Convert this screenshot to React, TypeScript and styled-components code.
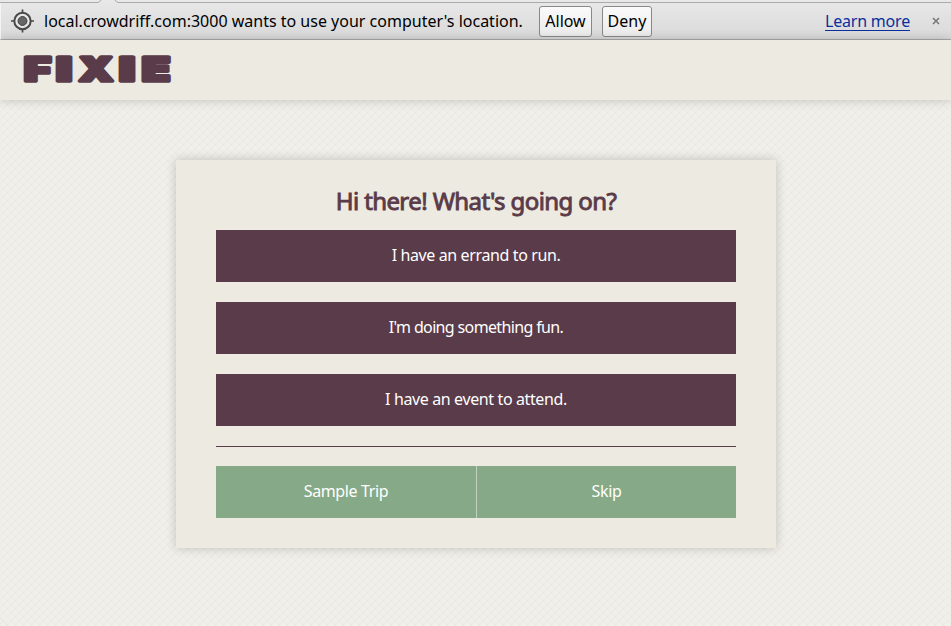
import React from "react";
import styled, { createGlobalStyle } from "styled-components";

const Global = createGlobalStyle`
  * { box-sizing: border-box; }
  body { margin: 0; background: #efeee8; }
`;

const Page = styled.div`
  width: 100%;
  height: 626px;
  overflow: hidden;
  display: flex;
  flex-direction: column;
  font-family: "Noto Sans", sans-serif;
  background-color: #f0efea;
  background-image:
    repeating-linear-gradient(45deg, rgba(120, 120, 100, 0.05) 0 1px, transparent 1px 5.657px),
    repeating-linear-gradient(-45deg, rgba(120, 120, 100, 0.05) 0 1px, transparent 1px 5.657px);
`;

const TabEdge = styled.svg`
  display: block;
  flex: none;
  width: 951px;
  height: 3px;
  background: #e8e8e8;
`;

const InfoBar = styled.div`
  flex: none;
  height: 37px;
  padding: 0 11px 0 10px;
  display: flex;
  align-items: center;
  background: linear-gradient(#e7e7e7, #d9d9d9);
  border-bottom: 1px solid #aaa;
  border-left: 1px solid #f4f4f4;
  font-size: 16px;
  line-height: 22px;
  color: #000;
`;

const Target = styled.svg`
  flex: none;
  width: 23px;
  height: 24px;
  margin-right: 10px;
`;

const Fit = styled.span<{ $spacing?: number }>`
  white-space: nowrap;
  letter-spacing: ${(p) => p.$spacing ?? 0}px;
`;

const Message = styled.div`
  flex: none;
  width: 479px;
`;

const BarButton = styled.button<{ $width: number; $gap: number }>`
  flex: none;
  width: ${(p) => p.$width}px;
  height: 31px;
  margin-left: ${(p) => p.$gap}px;
  padding: 0;
  border: 1px solid #888;
  border-radius: 3px;
  background: linear-gradient(#fafafa, #ebebeb);
  font: 16px/22px "Noto Sans", sans-serif;
  color: #000;
`;

const LearnMore = styled.a`
  margin-left: auto;
  height: 20px;
  line-height: 20px;
  color: #0a2f9c;
  border-bottom: 1px solid #0a2f9c;
`;

const Close = styled.svg`
  flex: none;
  width: 8px;
  height: 8px;
  margin: 0 0 0 22px;
`;

const Header = styled.header`
  flex: none;
  height: 60px;
  padding: 0 0 0 19px;
  background: #edeae1;
  box-shadow: 0 0 10px rgba(0, 0, 0, 0.2);
`;

const Logo = styled.svg`
  display: block;
  width: 156px;
  height: 60px;
  overflow: visible;
  font-family: Inter, sans-serif;
  font-weight: 900;
  font-size: 33px;
`;

const Card = styled.main`
  width: 600px;
  height: 388px;
  margin: 60px 0 0 176px;
  padding: 25px 40px 30px;
  background: #edeae1;
  box-shadow: 0 0 10px rgba(0, 0, 0, 0.2);
`;

const Title = styled.h1`
  margin: 0;
  height: 45px;
  text-align: center;
  font-size: 24px;
  line-height: 32px;
  font-weight: 400;
  color: #5a3b49;
  -webkit-text-stroke: 0.9px #5a3b49;
`;

const Choice = styled.button`
  display: block;
  width: 100%;
  height: 52px;
  margin: 0 0 20px;
  padding: 0 0 2px;
  border: 0;
  background: #5a3b49;
  color: #fff;
  font: 16px/22px "Noto Sans", sans-serif;
`;

const Divider = styled.hr`
  height: 1px;
  margin: 0 0 19px;
  border: 0;
  background: #5a3b49;
`;

const Pair = styled.div`
  display: grid;
  grid-template-columns: 260px 259px;
  gap: 1px;
  background: #c5d2bf;
`;

const PairButton = styled(Choice)`
  margin: 0;
  background: #86aa87;
`;

const STRETCH = 1.6;

const letters = [
  { c: "F", x: 5, w: 27 },
  { c: "I", x: 37, w: 16 },
  { c: "X", x: 60, w: 34 },
  { c: "I", x: 100, w: 16 },
  { c: "E", x: 122.8, w: 28.5 },
];

const choices = [
  { text: "I have an errand to run.", spacing: -0.38 },
  { text: "I'm doing something fun.", spacing: -0.64 },
  { text: "I have an event to attend.", spacing: -0.38 },
];

export default function App() {
  return (
    <Page>
      <Global />
      <TabEdge viewBox="0 0 951 3">
        <path d="M0 2.5H97Q100 2.5 101 0M115 0Q116 2.5 119 2.5H951" fill="none" stroke="#aaa" />
      </TabEdge>
      <InfoBar>
        <Target viewBox="0 0 23 24">
          <circle cx="11.5" cy="12" r="7" fill="#e6e6e6" />
          <g fill="none" stroke="#484848">
            <circle cx="11.5" cy="12" r="8.2" strokeWidth="2" />
            <path d="M11.5 .5V4M11.5 20v3.5M0 12H4M19 12h4" strokeWidth="1.7" />
          </g>
          <circle cx="11.5" cy="12" r="4.4" fill="#666" stroke="#3a3a3a" />
        </Target>
        <Message><Fit>local.crowdriff.com:3000 wants to use your computer's location.</Fit></Message>
        <BarButton $width={53} $gap={16}><Fit>Allow</Fit></BarButton>
        <BarButton $width={50} $gap={10}><Fit>Deny</Fit></BarButton>
        <LearnMore><Fit $spacing={-0.2}>Learn more</Fit></LearnMore>
        <Close viewBox="0 0 8 8">
          <path d="M1 1l6 6M7 1L1 7" stroke="#777" strokeWidth="1.6" />
        </Close>
      </InfoBar>
      <Header>
        <Logo viewBox="0 0 156 60" fill="#5a3b49" stroke="#5a3b49" strokeWidth="3.6" strokeLinejoin="round">
          {letters.map((l, i) => (
            <text
              key={i}
              transform={`translate(${l.x} 41.2) scale(${STRETCH} 1)`}
              textLength={l.w / STRETCH}
              lengthAdjust="spacingAndGlyphs"
            >
              {l.c}
            </text>
          ))}
        </Logo>
      </Header>
      <Card>
        <Title><Fit $spacing={-0.6}>Hi there! What's going on?</Fit></Title>
        {choices.map((c) => (
          <Choice key={c.text}><Fit $spacing={c.spacing}>{c.text}</Fit></Choice>
        ))}
        <Divider />
        <Pair>
          <PairButton><Fit $spacing={-0.36}>Sample Trip</Fit></PairButton>
          <PairButton><Fit $spacing={-0.3}>Skip</Fit></PairButton>
        </Pair>
      </Card>
    </Page>
  );
}
